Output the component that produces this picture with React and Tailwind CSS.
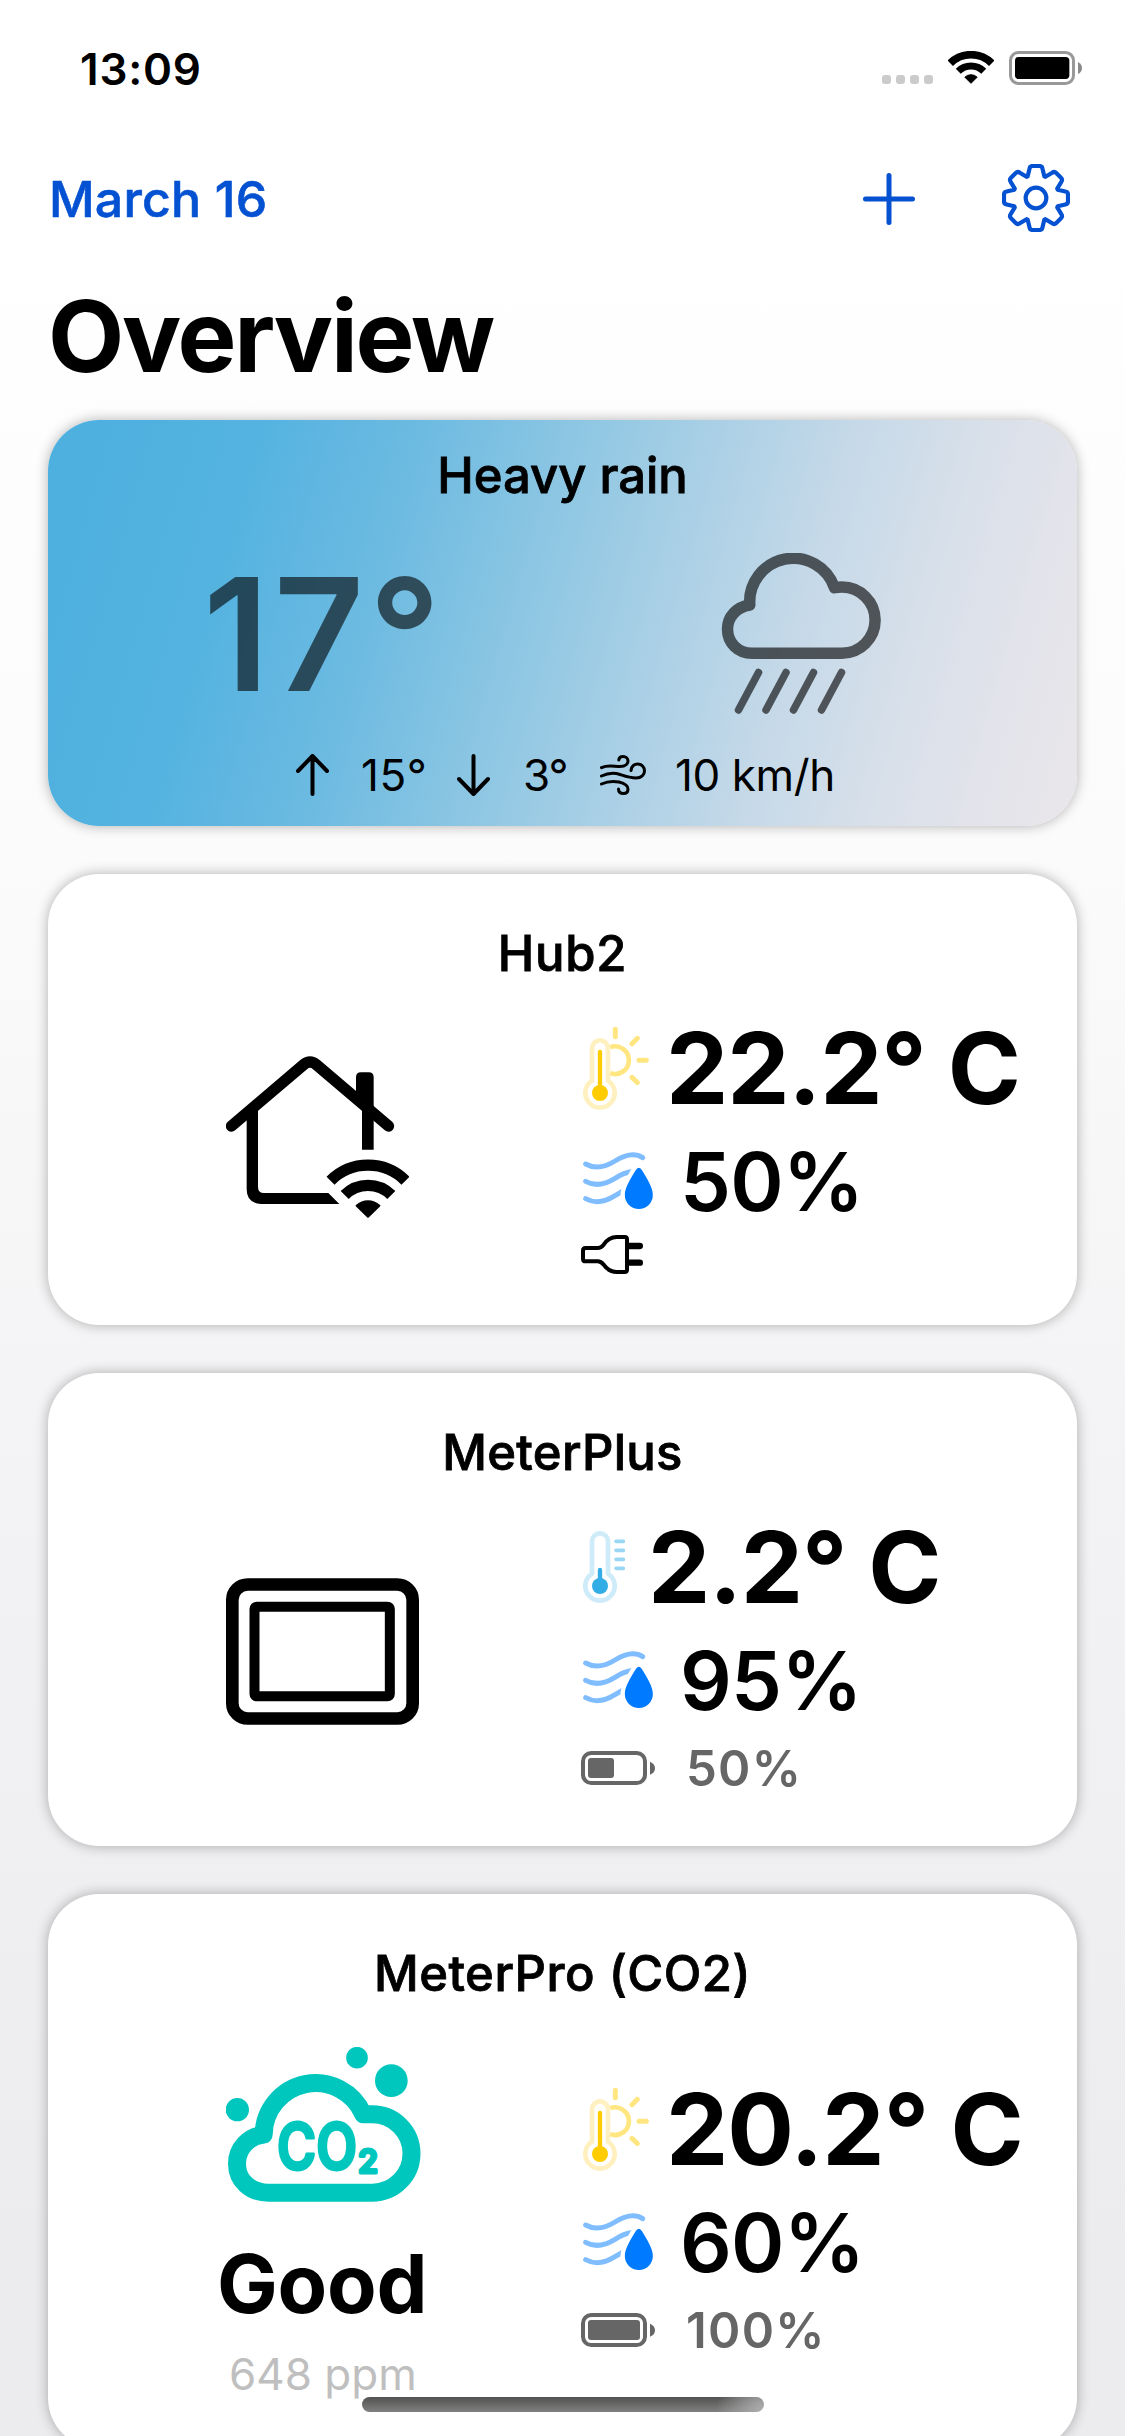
import React from "react";

function StatusWifi() {
  return (
    <svg className="w-[46px] h-[33px]" viewBox="264 66 138 99" fill="none" stroke="#000">
      <path d="M270.8 102.8A88 88 0 0 1 395.2 102.8" strokeWidth="23" />
      <path d="M294.8 126.8A54 54 0 0 1 371.2 126.8" strokeWidth="21" />
      <path d="M333 163L314.5 144.5A27 27 0 0 1 351.5 144.5Z" fill="#000" strokeWidth="3" strokeLinejoin="round" />
    </svg>
  );
}

function StatusBattery() {
  return (
    <svg className="w-[73px] h-[34px]" viewBox="447 66 219 102">
      <rect x="451.5" y="70.5" width="189" height="93" rx="24" fill="none" stroke="#999" strokeWidth="9" />
      <rect x="465" y="84" width="163" height="66" rx="11" fill="#000" />
      <path d="M654 99Q666 105 666 117Q666 129 654 135Z" fill="#8a8a8a" />
    </svg>
  );
}

function PlusIcon() {
  return (
    <svg className="mt-[2px] w-[52px] h-[52px]" viewBox="0 0 52 52" stroke="#0451d2" strokeWidth="5" strokeLinecap="round">
      <path d="M26 2.5V49.5M2.5 26H49.5" />
    </svg>
  );
}

const teeth = [0, 45, 90, 135, 180, 225, 270, 315];

function gearPath() {
  const rot = (x, y, deg) => {
    const a = (deg * Math.PI) / 180;
    const rx = x * Math.cos(a) - y * Math.sin(a);
    const ry = x * Math.sin(a) + y * Math.cos(a);
    return `${rx.toFixed(2)} ${ry.toFixed(2)}`;
  };
  return (
    teeth
      .map((t, i) => {
        const p = (x, y) => rot(x, y, t);
        return `${i ? "L" : "M"}${p(-25, -65)}L${p(-19.5, -88)}Q${p(-18, -96)} ${p(-10, -96)}L${p(10, -96)}Q${p(18, -96)} ${p(19.5, -88)}L${p(25, -65)}`;
      })
      .join("") + "Z"
  );
}

function GearIcon() {
  return (
    <svg className="w-[68px] h-[68px]" viewBox="-102 -102 204 204" fill="none" stroke="#0451d2" strokeWidth="12.5" strokeLinejoin="round">
      <path d={gearPath()} />
      <circle r="31" />
    </svg>
  );
}

function HeavyRainIcon() {
  return (
    <svg className="w-[160px] h-[161px]" viewBox="0 0 160 161" fill="none" stroke="#000" strokeOpacity="0.62" strokeLinecap="round" strokeLinejoin="round">
      <path d="M31 100.2H121A33.1 33.1 0 0 0 121 34Q117 34 113.5 34.7A43.6 43.6 0 0 0 28.8 52C15.5 54 6.5 64 6.5 76C6.5 90 17 100.2 31 100.2Z" strokeWidth="11.5" />
      <path d="M37.5 119.5L17.5 157M65 119.5L45 157M92.5 119.5L72.5 157M120.5 119.5L100.5 157" strokeWidth="7.5" />
    </svg>
  );
}

function Arrow({ down }) {
  return (
    <svg className="w-[33px] h-[42px] shrink-0" viewBox="0 0 33 42" fill="none" stroke="#000" strokeWidth="4" strokeLinecap="round" strokeLinejoin="round">
      {down ? <path d="M16.5 2V39.5M2 25L16.5 40L31 25" /> : <path d="M16.5 40V2.5M2 17L16.5 2L31 17" />}
    </svg>
  );
}

function WindIcon() {
  return (
    <svg className="w-[46px] h-[40px] shrink-0" viewBox="0 0 46 40" fill="none" stroke="#000" strokeWidth="3" strokeLinecap="round">
      <path d="M1.5 12.6C8 9.5 14 11.5 20 11.5C26 11.5 28 8.5 28 6C28 3.5 26 1.5 23 1.5C20.5 1.5 19 3 18.8 5" />
      <path d="M1.5 21C8 18 14 17.5 20 19.5C26 21.5 30 23 36 23C41.5 23 44.5 19.5 44.5 16C44.5 12 41.5 9 38 9C34 9 31.5 11.5 31 15.5" />
      <path d="M1.5 29C8 26 14 26 19 27C25 28.5 28 31 28 34C28 37 26 38.5 23.5 38.5C20.5 38.5 18.5 37 18.5 34" />
    </svg>
  );
}

function HouseIcon() {
  return (
    <svg className="w-[183px] h-[162px]" viewBox="138 108 549 486" fill="#000">
      <path d="M154.5 318L371 134Q390 118 409 134L625.5 318" fill="none" stroke="#000" strokeWidth="34" strokeLinecap="round" />
      <path d="M200 270H234V500Q234 519 252 519H445L478 552H243Q200 550 200 508Z" />
      <path d="M528 172Q528 157 543 157H566Q581 157 581 172V389H546V260L528 245Z" />
      <g fill="none" stroke="#000" strokeWidth="34">
        <path d="M451.6 482A159 159 0 0 1 676.4 482" />
        <path d="M494 525A99 99 0 0 1 634 525" />
      </g>
      <path d="M564 590L530 557A50 50 0 0 1 598 557Z" stroke="#000" strokeWidth="6" strokeLinejoin="round" />
    </svg>
  );
}

function MeterIcon() {
  return (
    <svg className="w-[193px] h-[147px]" viewBox="48 40 579 440" fill="none" stroke="#000">
      <rect x="67" y="59" width="541" height="402" rx="46" strokeWidth="38" />
      <rect x="133.5" y="125.5" width="406" height="269" rx="7" strokeWidth="30" />
    </svg>
  );
}

function Co2Icon() {
  return (
    <svg className="w-[195px] h-[155px]" viewBox="78 80 585 465" fill="#00c7be">
      <path
        d="M205 517H517A117.5 117.5 0 0 0 517 282H490A156 156 0 0 0 191 343C145 348 111 384 111 430C111 480 150 517 205 517Z"
        fill="none"
        stroke="#00c7be"
        strokeWidth="54"
        strokeLinejoin="round"
      />
      <circle cx="471" cy="112" r="32.5" />
      <circle cx="574" cy="181" r="49" />
      <circle cx="112" cy="268" r="35" />
      <g className="font-['Inter',sans-serif] font-semibold" stroke="#00c7be" strokeWidth="9" strokeLinejoin="round">
        <text x="231" y="447" fontSize="188" textLength="240" lengthAdjust="spacingAndGlyphs">CO</text>
        <text x="474" y="457" fontSize="96" textLength="60" lengthAdjust="spacingAndGlyphs">2</text>
      </g>
    </svg>
  );
}

function WarmIcon() {
  return (
    <svg className="w-[66px] h-[83px] shrink-0" viewBox="69 81 198 249" fill="none" strokeLinecap="round">
      <path d="M96 242V145A24 24 0 0 1 144 145V242A44 44 0 1 1 96 242Z" stroke="#fff0c0" strokeWidth="14" />
      <path d="M120 156V279" stroke="#fc0" strokeWidth="13" />
      <circle cx="120" cy="279" r="24" fill="#fc0" />
      <path d="M151 141.5A41.5 41.5 0 1 1 151 219.5" stroke="#ffe680" strokeWidth="14" strokeLinecap="butt" />
      <path d="M166 88V110M216 131L232 115M237 181H259M216 232L232 247.5" stroke="#ffe680" strokeWidth="15" />
    </svg>
  );
}

function ColdIcon() {
  return (
    <svg className="w-[42px] h-[72px] shrink-0" viewBox="69 63 126 216" fill="none" strokeLinecap="round">
      <path d="M96 191V94A24 24 0 0 1 144 94V191A44 44 0 1 1 96 191Z" stroke="#cdebf8" strokeWidth="14" />
      <path d="M120 180V228" stroke="#32ade6" strokeWidth="13" />
      <circle cx="120" cy="228" r="24" fill="#32ade6" />
      <path d="M168 94H190M168 121H190M168 148H190M168 175H190" stroke="#99d6f3" strokeWidth="11" />
    </svg>
  );
}

function HumidityIcon() {
  return (
    <svg className="mb-1 w-[70px] h-[57px] shrink-0" viewBox="69 453 210 171" fill="none">
      <g stroke="#80bdff" strokeWidth="15" strokeLinecap="round">
        <path d="M77 489C100 502 130 502 165 480C200 458 225 455 248 470" />
        <path d="M77 541C100 554 130 554 165 532C185 519 200 514 220 511" />
        <path d="M77 593C100 606 130 606 165 584L200 564" />
      </g>
      <path
        d="M236.5 500Q242 500 246 508C262 535 278.5 560 278.5 582A42 42 0 0 1 194.5 582C194.5 560 211 535 227 508Q231 500 236.5 500Z"
        fill="#007aff"
        stroke="#fff"
        strokeWidth="26"
        paintOrder="stroke"
      />
    </svg>
  );
}

function PlugIcon() {
  return (
    <svg className="w-[62px] h-[39px]" viewBox="63 705 186 117" fill="none" stroke="#000">
      <path
        d="M69 752Q69 744 77 744H113Q123 744 131 734Q146 711 170 711H194Q201 711 201 718V809Q201 816 194 816H170Q146 816 131 794Q123 784 113 784H77Q69 784 69 776Z"
        strokeWidth="12"
      />
      <path d="M207 738H239.5M207 788H239.5" strokeWidth="19" strokeLinecap="round" />
    </svg>
  );
}

function BatteryIcon({ level }) {
  return (
    <svg className="w-[74px] h-[34px] shrink-0" viewBox="63 723 222 102" fill="#666">
      <rect x="69" y="729" width="186" height="90" rx="25" fill="none" stroke="#666" strokeWidth="12" />
      <rect x="84" y="744" width={156 * level} height="60" rx="9" />
      <path d="M270 755Q285 762 285 774.5Q285 788 270 794Z" />
    </svg>
  );
}

const cardBase = "shrink-0 rounded-[51px] shadow-[0_0_13px_rgba(0,0,0,0.3)]";

function Title({ children }) {
  return (
    <h2 className="text-center text-[49px] leading-[60px] font-medium [-webkit-text-stroke:0.8px_#000]">{children}</h2>
  );
}

function Reading({ icon, value, gap, className }) {
  return (
    <div className={`flex h-[110px] items-center pl-[2px] ${gap} ${className || ""}`}>
      {icon}
      <span className="whitespace-nowrap text-[99px] leading-[110px] font-bold">{value}</span>
    </div>
  );
}

function Humidity({ value }) {
  return (
    <div className="mt-[14px] flex h-[90px] items-center gap-[27px] pl-[2px]">
      <HumidityIcon />
      <span className="text-[81px] leading-[90px] font-semibold tracking-[-0.8px]">{value}</span>
    </div>
  );
}

function Battery({ level, className }) {
  return (
    <div className={`flex h-[54px] items-center gap-[31px] text-[#666] ${className}`}>
      <BatteryIcon level={level} />
      <span className="pt-px text-[49px] leading-[54px] font-semibold tracking-[1.3px]">{Math.round(level * 100)}%</span>
    </div>
  );
}

function DeviceCard({ title, className, left, children }) {
  return (
    <section className={`${cardBase} mt-12 bg-white pt-[50px] ${className}`}>
      <Title>{title}</Title>
      <div className="-mt-px flex">
        <div className="ml-[178px] w-[355px] shrink-0">{left}</div>
        <div>{children}</div>
      </div>
    </section>
  );
}

export default function App() {
  return (
    <div className="relative flex h-[2436px] w-[1125px] flex-col overflow-hidden bg-[linear-gradient(180deg,#ffffff_8%,#fbfbfb_35%,#f3f3f5_60%,#ececef_92%)] px-12 font-['Inter',sans-serif] text-black">
      <div className="mt-[46px] -mr-[5px] flex h-[44px] shrink-0 items-center justify-between pl-[32px]">
        <span className="pt-px text-[44px] leading-[44px] font-semibold tracking-[0.8px]">13:09</span>
        <div className="flex h-[34px] items-end gap-[15px]">
          <div className="mb-px flex gap-[5px]">
            {[0, 1, 2, 3].map((i) => (
              <span key={i} className="size-[9px] rounded-[3px] bg-[#cbcbcb]" />
            ))}
          </div>
          <div className="mb-px flex">
            <StatusWifi />
          </div>
          <StatusBattery />
        </div>
      </div>

      <header className="mt-[74px] flex h-[68px] shrink-0 items-center justify-between pr-[7px]">
        <span className="pt-px pl-px text-[50px] leading-[60px] font-medium tracking-[0.2px] text-[#0451d2] [-webkit-text-stroke:0.6px_#0451d2]">
          March 16
        </span>
        <div className="flex items-center gap-[87px]">
          <PlusIcon />
          <GearIcon />
        </div>
      </header>

      <h1 className="mt-[49px] shrink-0 text-[99px] leading-[110px] font-bold tracking-[-2.23px]">Overview</h1>

      <section
        className={`${cardBase} mt-[29px] h-[406px] bg-[linear-gradient(106deg,#4db0df_4%,#55b3e0_19%,#6bbae1_32%,#8cc6e3_46%,#abd0e6_59%,#c6d9e8_71%,#d8e0ea_82%,#e2e3eb_90%,#e8e6ea_98%)] pt-[26px]`}
      >
        <Title>Heavy rain</Title>
        <div className="mt-[47px] flex h-[161px] pl-[155px]">
          <span className="w-[240px] text-[157px] leading-[162px] font-semibold tracking-[4.4px] text-black/60">17°</span>
          <div className="ml-[278px]">
            <HeavyRainIcon />
          </div>
        </div>
        <div className="mt-[35px] flex h-[52px] items-center pl-[248px] text-[44px] leading-[52px]">
          <Arrow />
          <span className="ml-[32px] w-[66px] tracking-[0.6px]">15°</span>
          <span className="ml-[30px] flex">
            <Arrow down />
          </span>
          <span className="ml-[33px] w-[44px] tracking-[-1px]">3°</span>
          <span className="ml-[33px] flex">
            <WindIcon />
          </span>
          <span className="ml-[29px] whitespace-nowrap tracking-[-0.4px]">10 km/h</span>
        </div>
      </section>

      <DeviceCard
        title={<span className="tracking-[0.8px]">Hub2</span>}
        className="h-[451px]"
        left={
          <div className="mt-[73px]">
            <HouseIcon />
          </div>
        }
      >
        <Reading className="mt-[30px] tracking-[-1.2px]" gap="gap-[17px]" icon={<WarmIcon />} value="22.2° C" />
        <Humidity value="50%" />
        <div className="mt-[8px]">
          <PlugIcon />
        </div>
      </DeviceCard>

      <DeviceCard
        title={<span className="tracking-[0.3px]">MeterPlus</span>}
        className="h-[473px]"
        left={
          <div className="mt-[96px]">
            <MeterIcon />
          </div>
        }
      >
        <Reading className="mt-[30px] tracking-[-1.3px]" gap="gap-[23px]" icon={<ColdIcon />} value="2.2° C" />
        <Humidity value="95%" />
        <Battery level={0.5} className="mt-[15px]" />
      </DeviceCard>

      <DeviceCard
        title={<span className="tracking-[0.5px]">MeterPro (CO2)</span>}
        className="h-[555px]"
        left={
          <div className="mt-[44px]">
            <Co2Icon />
            <div className="mt-[37px] -ml-[9px] text-[81px] leading-[90px] font-bold tracking-[-0.2px]">Good</div>
            <div className="mt-[19px] ml-[3px] text-[44px] leading-[52px] text-[#bfbfbf]">648 ppm</div>
          </div>
        }
      >
        <Reading className="mt-[71px] tracking-[-1px]" gap="gap-[17px]" icon={<WarmIcon />} value="20.2° C" />
        <Humidity value="60%" />
        <Battery level={1} className="mt-[15px]" />
      </DeviceCard>

      <div className="absolute bottom-6 left-[362px] h-[15px] w-[402px] rounded-full bg-[radial-gradient(circle_at_100%_100%,#b0b0b0_0,#b0b0b000_48px),linear-gradient(180deg,#515350,#808080)]" />
    </div>
  );
}
